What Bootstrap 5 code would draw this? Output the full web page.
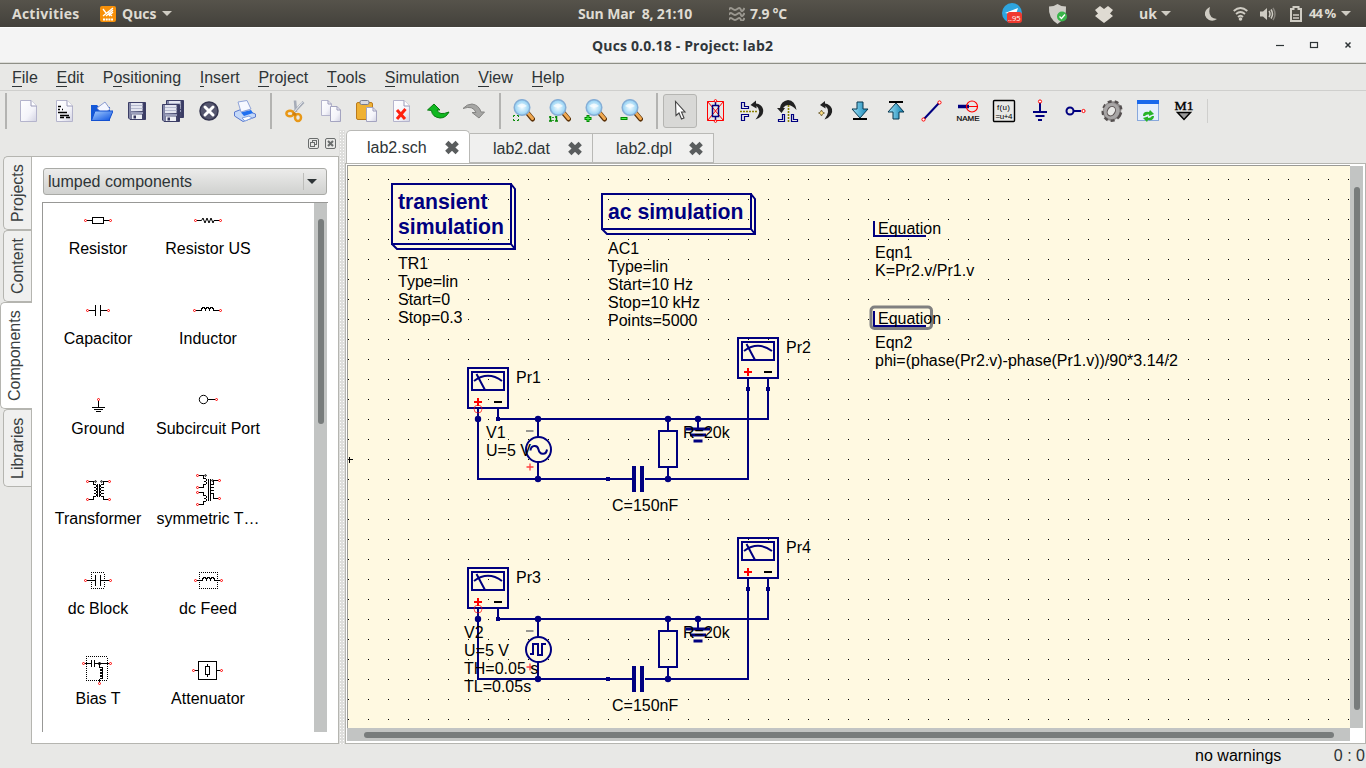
<!DOCTYPE html>
<html lang="en">
<head>
<meta charset="utf-8">
<title>Qucs 0.0.18 - Project: lab2</title>
<link href="https://cdn.jsdelivr.net/npm/bootstrap@5.3.0/dist/css/bootstrap.min.css" rel="stylesheet">
<script src="https://cdn.jsdelivr.net/npm/bootstrap@5.3.0/dist/js/bootstrap.bundle.min.js"></script>
<style>
body{width:1366px;height:768px;overflow:hidden;background:#e8e8e6;color:#2e3436;font:16px/18px "Liberation Sans",Arial,sans-serif}
body>*{flex:none}
svg{display:block;flex:none}
.panel-top{height:27px;background:linear-gradient(#56534b,#43413b);color:#dfdbd2;font:700 14px/27px "Open Sans","Noto Sans",sans-serif;white-space:pre}
.panel-top span,.panel-top svg{flex:none}
.title-bar{height:36px;background:#f4f4f4;color:#30363a;font:700 14px/36px "Open Sans","Noto Sans",sans-serif;border-top:1px solid #fdfdfd;border-bottom:1px solid #dcdcd8}
.menu-bar{height:28px;gap:18.7px;padding:2px 0 0 12px;border-top:1px solid #8e8f87;border-bottom:1px solid #cfcfcd;line-height:24px}
.menu-bar u{text-decoration:none;box-shadow:0 1px 0 #2e3436;display:inline-block;height:20px;line-height:24px}
.tool-bar{height:39px;padding:2px 0 0 5px}
.tool-bar .grip{width:2px;height:36px;background:#b3b3b1;flex:none;margin-right:3.500px}
.tool{width:36px;height:36px;display:flex;align-items:center;justify-content:center;flex:none}
.tool.sel span{width:34px;height:34px;border:1px solid #b5b5b2;border-radius:3px;background:#d8d8d6;display:flex;align-items:center;justify-content:center}
.dock{width:339px;height:614px;flex:none}
.dock-head{height:26px;gap:4px;padding:7px 2px 0 0}
.side-tabs{width:31px;flex:none}
.side-tab{writing-mode:vertical-rl;transform:rotate(180deg);background:#f0f0ef;border:1px solid #b5b5b0;border-left:0;border-radius:0 5px 5px 0;width:28px;margin-left:3px;line-height:27px;text-align:center;color:#3a3f41}
.side-tab.act{width:32px;margin-left:0;background:#fff;position:relative;z-index:2}
.dock-page{background:#fff;border:1px solid #b5b5b0;width:308px;height:588px;padding:11px 11px 0 10px}
.combo{height:27px;width:284px;margin-left:1px;border:1px solid #a9aaa6;border-radius:3px;background:linear-gradient(#ececeb,#d0d1cf);padding:0 9px 0 4px;line-height:25px}
.combo i{border:5px solid transparent;border-top:5px solid #2e3436;border-bottom:0}
.combo b{width:1px;height:17px;background:#bdbdba;margin:0 3px 0 auto}
.comp-list{height:530px;margin-top:7px;border-top:1px solid #989896;border-left:1px solid #989896;overflow:hidden;color:#000;width:286px}
.comp-grid{width:271px;flex:none;align-content:flex-start;line-height:22px}
.comp-cell{width:110px;height:90px;text-align:center;flex:none;white-space:nowrap}
.comp-cell svg{margin-bottom:1px;shape-rendering:crispEdges}
.comp-cell circle,.comp-cell .soft{shape-rendering:geometricPrecision}
.vscroll{width:13px;background:#c2c4c3;flex:none}
.thumb{background:#787c7c;border-radius:3px}
.splitter{width:6px;height:614px;flex:none;background:radial-gradient(#fff 35%,transparent 40%) 0 0/3px 3px,#dededc}
.doc-tab{height:30px;border:1px solid #b9b9b6;border-left:0;background:#f0f0ef;width:123px;padding:0 9px 0 23px;margin-top:3px;line-height:27px}
.doc-tab.act{height:33px;width:124px;margin:0;border-left:1px solid #b9b9b6;border-bottom:0;background:#fff;border-radius:5px 5px 0 0;padding-left:20px;line-height:31px}
.doc-frame{background:#fff;border:1px solid #b5b5b0;height:581px;padding:1px 2px 1px 1px}
.sheet{border-top:1px solid #9a9a96;border-left:1px solid #9a9a96;width:1003px;height:563px}
.hscroll{height:13px;width:1003px;background:#c2c4c3;padding:4px 16px 3px 17px}
.status-line{height:24px;line-height:24px;padding-right:1px}
.bd{font-weight:700;font-size:21.2px;fill:#000080}
.ln{fill:none;stroke:#000080;stroke-width:2}
.k{fill:none;stroke:#000;stroke-width:1}
.rd{fill:#fff;stroke:#f00;stroke-width:1}
</style>
</head>
<body class="d-flex flex-column">
<svg width="0" height="0" class="position-absolute">
<defs>
<linearGradient id="gd" x1="0" y1="0" x2="1" y2="1"><stop offset="0" stop-color="#fff"/><stop offset=".6" stop-color="#f4f4fa"/><stop offset="1" stop-color="#d2d2e2"/></linearGradient>
<linearGradient id="gb" x1="0" y1="0" x2="1" y2="1"><stop offset="0" stop-color="#a8d0ff"/><stop offset="1" stop-color="#0a50e0"/></linearGradient>
<linearGradient id="gs" x1="0" y1="0" x2="1" y2="0"><stop offset="0" stop-color="#8b8fae"/><stop offset="1" stop-color="#34365e"/></linearGradient>
<linearGradient id="ga" x1="0" y1="0" x2="1" y2="0"><stop offset="0" stop-color="#9fe4fa"/><stop offset="1" stop-color="#1080b0"/></linearGradient>
<radialGradient id="gl"><stop offset="0" stop-color="#f4fcff"/><stop offset="1" stop-color="#90d0f4"/></radialGradient>
<symbol id="floppy" viewBox="0 0 18 18"><path d="M.5 .5H17.500V17.500H2L.5 16Z" fill="url(#gs)" stroke="#3c3e66"/><path d="M3 1H14.500V9H3Z" fill="#e4e6f0"/><path d="M3 3.500H14.500M3 6.500H14.500" stroke="#b4b9ce"/><path d="M3 10H15V12H3Z" fill="#9a9eba"/><path d="M4 12.500H14V17H4Z" fill="#eef0f6"/><path d="M5.500 13.500H8V16.500H5.500Z" fill="#34365e"/></symbol>
<symbol id="glass" viewBox="0 0 24 24"><path d="M16.500 14L21.500 20" stroke="#5c3208" stroke-width="5" stroke-linecap="round"/><path d="M16.500 13.500L21.500 19.500" stroke="#f0a850" stroke-width="3" stroke-linecap="round"/><circle cx="11" cy="8.500" r="7.800" fill="url(#gl)" stroke="#86aed6" stroke-width="1.500"/><path d="M6 7Q11 2 16 7Q11 10 6 7" fill="#fff" opacity=".7"/></symbol>
<symbol id="closeX" viewBox="0 0 15 15"><path d="M2.300 2.600L12.700 12.400M12.700 2.600L2.300 12.400" stroke="#5a5d5e" stroke-width="4.800"/></symbol>
</defs>
</svg>

<header class="panel-top d-flex align-items-center">
<span style="width:100px;padding-left:12px;letter-spacing:.25px">Activities</span>
<svg width="16" height="16" viewBox="0 0 16 16"><rect width="16" height="16" rx="2" fill="#f79009"/><path d="M3 3L6 7M3 10L13 2M6 10L13 4M9 10L13 6M8 6L12 10" stroke="#fff" stroke-width="1.300"/><path d="M3 13.500H13" stroke="#fff" stroke-width="2" stroke-dasharray="2 .7"/></svg>
<span style="width:46px;padding-left:6px">Qucs</span>
<svg width="10" height="6" viewBox="0 0 10 6"><path d="M0 0H10L5 5Z" fill="#cfccc3"/></svg>
<span style="width:557px;padding-left:406px;letter-spacing:-.15px">Sun Mar  8, 21:10</span>
<svg width="16" height="15" viewBox="0 0 16 15"><path id="wv" d="M0 4Q1 1 3 2.500T6 4T9 2.500T12 4T15.500 2" fill="none" stroke="#9a978f" stroke-width="2"/><use href="#wv" y="5"/><use href="#wv" y="10"/></svg>
<span style="width:257px;padding-left:5px;letter-spacing:-.3px">7.9 °C</span>
<svg width="20" height="22" viewBox="0 0 20 22"><circle cx="10" cy="10" r="10" fill="#2ea5df"/><path d="M3 10L16 5L13 14L9 11Z" fill="#fff"/><rect x="5" y="9" width="15" height="11" rx="3" fill="#f03a30"/><text x="6" y="17.500" font-size="7.500" font-weight="400" fill="#fff" font-family="Open Sans">..95</text></svg>
<svg class="ms-auto" style="margin-right:27px" width="20" height="22" viewBox="0 0 20 22"><path d="M9.500 1Q13 3.500 18 3.500Q19 15 9.500 21Q0 15 1 3.500Q6 3.500 9.500 1Z" fill="#cfcdc7"/><circle cx="14" cy="13.500" r="5" fill="#39b54a"/><path d="M11.500 13.500L13.500 15.500L17 11.500" fill="none" stroke="#fff" stroke-width="1.300"/></svg>
<svg width="18" height="18" viewBox="0 0 18 18"><path d="M5 1L9 4L13 1L18 5L15 8.500L18 11L13 15L9 18L5 15L0 11L3 8.500L0 5Z" fill="#dfdbd2"/></svg>
<span style="width:48px;padding-left:26px">uk</span>
<svg width="10" height="6" viewBox="0 0 10 6"><path d="M0 0H10L5 5Z" fill="#cfccc3"/></svg>
<svg style="margin-left:34px" width="12" height="14" viewBox="0 0 12 14"><path d="M5 0Q2 11 12 12Q8 15 4 13Q-1 10 0 5.500Q1 1.500 5 0Z" fill="#cfccc3"/></svg>
<svg style="margin-left:16px" width="15" height="14" viewBox="0 0 15 14"><path d="M.7 4Q7.500 -2 14.300 4M3 7Q7.500 3 12 7M5 10Q7.500 7.500 10 10" fill="none" stroke="#cfccc3" stroke-width="1.800"/><circle cx="7.500" cy="12" r="1.800" fill="#cfccc3"/></svg>
<svg style="margin-left:12px" width="16" height="14" viewBox="0 0 16 14"><path d="M0 4.500H3L7 1V13L3 9.500H0Z" fill="#cfccc3"/><path d="M9 4Q11 7 9 10M11 2.500Q14 7 11 11.500" fill="none" stroke="#cfccc3" stroke-width="1.500"/><path d="M13 1Q17 7 13 13" fill="none" stroke="#85827b" stroke-width="1.500"/></svg>
<svg style="margin-left:14px" width="12" height="16" viewBox="0 0 12 16"><path d="M1 3H3.500V1H8.500V3H11V15H1Z" fill="none" stroke="#cfccc3" stroke-width="2"/><path d="M3 9H9M3 12H9" stroke="#cfccc3" stroke-width="1.500"/></svg>
<span style="width:39px;padding-left:7px;letter-spacing:-.9px;font-size:13px">44 %</span>
<svg style="margin-right:15px" width="10" height="6" viewBox="0 0 10 6"><path d="M0 0H10L5 5Z" fill="#cfccc3"/></svg>
</header>

<div class="title-bar d-flex align-items-start">
<div style="padding-left:592px;width:1276px;letter-spacing:.16px">Qucs 0.0.18 - Project: lab2</div>
<svg width="80" height="34" viewBox="1276 28 80 34"><path d="M1276 45.500H1284" stroke="#2e3436" stroke-width="1.200"/><rect x="1310.500" y="42.500" width="7" height="5" fill="none" stroke="#2e3436" stroke-width="1.200"/><path d="M1345.500 42.500L1350.500 47.500M1350.500 42.500L1345.500 47.500" stroke="#2e3436" stroke-width="1.500"/></svg>
</div>

<nav class="menu-bar d-flex"><span><u>F</u>ile</span><span><u>E</u>dit</span><span>P<u>o</u>sitioning</span><span><u>I</u>nsert</span><span><u>P</u>roject</span><span><u>T</u>ools</span><span><u>S</u>imulation</span><span><u>V</u>iew</span><span><u>H</u>elp</span></nav>

<div class="tool-bar d-flex align-items-start">
<div class="grip"></div>
<div class="tool"><svg width="24" height="24"><path d="M3.500 1.500H14L19.500 7V22.500H3.500Z" fill="url(#gd)" stroke="#b4b4cc"/><path d="M14 1.500V7H19.500" fill="#fff" stroke="#9a9ab8"/></svg></div>
<div class="tool"><svg width="24" height="24"><path d="M3.500 1.500H14L19.500 7V22.500H3.500Z" fill="url(#gd)" stroke="#b4b4cc"/><path d="M14 1.500V7H19.500" fill="#fff" stroke="#9a9ab8"/><path d="M5 7.500H8M5 10.500H7M9 10.500H10M5 13.500H14M7 16.500H16M7 18.500H11M13 18.500H17" stroke="#000" stroke-width="1.300"/></svg></div>
<div class="tool"><svg width="24" height="24"><path d="M2 6H8L10 8H21V22H2Z" fill="#1458d8"/><path d="M8 9L16 3L21 10L14 16Z" fill="#f4f6ff" stroke="#8c9cd0"/><path d="M6 12H24L20 21.500H2.500Z" fill="url(#gb)" stroke="#1250d0"/></svg></div>
<div class="tool"><svg width="24" height="24"><use href="#floppy" x="3" y="3" width="18" height="18"/></svg></div>
<div class="tool"><svg width="24" height="24"><use href="#floppy" x="5" y="1" width="18" height="18"/><use href="#floppy" x="1" y="5" width="18" height="18"/></svg></div>
<div class="tool"><svg width="24" height="24"><circle cx="12" cy="12" r="9" fill="#55566e" stroke="#33344e" stroke-width="1.500"/><path d="M8 8L16 16M16 8L8 16" stroke="#fff" stroke-width="3" stroke-linecap="round"/></svg></div>
<div class="tool"><svg width="24" height="24"><path d="M1.500 13L9 10L22.500 15V18L10 22.500L1.500 17Z" fill="#c4d8f8" stroke="#5a7ad0"/><path d="M5 3L14 1.500L18 10L8 13Z" fill="#f6f8ff" stroke="#90a4d8"/><path d="M8 13.500L18 11L20 14L11 17Z" fill="#2070f0"/><path d="M9 19L16 17L19 19L12 22Z" fill="#fff" stroke="#80a0e0"/></svg></div>
<div class="grip" style="margin-left:7.500px"></div>
<div class="tool"><svg width="24" height="24"><path d="M13 1.500L14 13M21.500 3L11 14" stroke="#a6acb8" stroke-width="2.600"/><path d="M20.500 3L12 13" stroke="#eef0f4"/><ellipse cx="8" cy="14.500" rx="3.600" ry="2.800" fill="none" stroke="#e89818" stroke-width="2.500"/><ellipse cx="16" cy="18.500" rx="3" ry="3.600" fill="none" stroke="#e89818" stroke-width="2.500"/><path d="M11 14L14 16" stroke="#d08010" stroke-width="3"/></svg></div>
<div class="tool"><svg width="24" height="24"><path d="M3.500 1.500H10L13.500 5V16.500H3.500Z" fill="url(#gd)" stroke="#b4b4cc"/><path d="M10 1.500V5H13.500" fill="none" stroke="#9a9ab8"/><path d="M12.500 7.500H19L22.500 11V22.500H12.500Z" fill="url(#gd)" stroke="#a4a4c0"/><path d="M19 7.500V11H22.500" fill="none" stroke="#9a9ab8"/></svg></div>
<div class="tool"><svg width="24" height="24"><rect x="2.500" y="3.500" width="16" height="17" rx="1.500" fill="#efb134" stroke="#bb7b1c"/><rect x="6" y="1.500" width="9" height="4" rx="1.500" fill="#d8dae2" stroke="#787c8c"/><path d="M12.500 8.500H19L22.500 12V22.500H12.500Z" fill="url(#gd)" stroke="#a4a4c0"/><path d="M19 8.500V12H22.500" fill="none" stroke="#9a9ab8"/></svg></div>
<div class="tool"><svg width="24" height="24"><path d="M3.500 1.500H14L19.500 7V22.500H3.500Z" fill="url(#gd)" stroke="#b4b4cc"/><path d="M14 1.500V7H19.500" fill="#fff" stroke="#9a9ab8"/><path d="M7 11L15 20M15.500 10L7 20" stroke="#ff2010" stroke-width="3"/></svg></div>
<div class="tool"><svg width="24" height="24"><path d="M1.500 11L8 5L14 11H11Q13 17 23 13Q20 19 14 19Q6 18 5.500 11.500Z" fill="#10b820" stroke="#087c10"/></svg></div>
<div class="tool"><svg width="24" height="24"><path d="M22.500 13L17 19L10 13.500H14Q11 6 1 9.500Q5 5 10 5Q17 6 19 13Z" fill="#a6a6a4" stroke="#858583"/></svg></div>
<div class="grip" style="margin-left:7.500px"></div>
<div class="tool"><svg width="24" height="24"><use href="#glass"/><path d="M2.500 18V16.500H4M6 16.500H7.500V18M2.500 20V21.500H4M6 21.500H7.500V20" fill="none" stroke="#008800"/></svg></div>
<div class="tool"><svg width="24" height="24"><use href="#glass"/><path d="M3.500 17V22M2 22H5M2 18H4M9.500 17V22M8 22H11M8 18H10M6 18V19M6 21V22" fill="none" stroke="#008800" stroke-width="1.500"/></svg></div>
<div class="tool"><svg width="24" height="24"><use href="#glass"/><path d="M5 16V23M1.500 19.500H8.500" stroke="#008800" stroke-width="3"/><path d="M5 17V22M2.500 19.500H7.500" stroke="#50f050"/></svg></div>
<div class="tool"><svg width="24" height="24"><use href="#glass"/><path d="M1.500 19.500H8.500" stroke="#008800" stroke-width="3"/><path d="M2.500 19.500H7.500" stroke="#50f050"/></svg></div>
<div class="grip" style="margin-left:7.500px"></div>
<div class="tool sel"><span><svg width="24" height="24"><path d="M7.500 2.500L8 16.500L11 14L13.500 20L16 19L13.500 13H17Z" fill="#fff" stroke="#444" stroke-width="1.100"/></svg></span></div>
<div class="tool"><svg width="24" height="24"><path d="M3.500 2.500H19.500V21.500H3.500ZM3.500 2.500L19.500 21.500M19.500 2.500L3.500 21.500" fill="none" stroke="#f00"/><path d="M11.500 3V6M11.500 18V21" stroke="#000080" stroke-width="1.500"/><rect x="8.500" y="6.500" width="6" height="11" fill="none" stroke="#000080" stroke-width="1.500"/><circle cx="11.500" cy="1.800" r="1.200" class="rd"/><circle cx="11.500" cy="22.200" r="1.200" class="rd"/></svg></div>
<div class="tool"><svg width="24" height="24"><path d="M1.500 3.500H4.500V7.500H8.500V9.500H1.500ZM1.500 21.500H4.500V17.500H8.500V15.500H1.500Z" fill="#e8e8e6" stroke="#000080" stroke-width="1.200"/><path d="M0 12.500H18" stroke="#8a8000" stroke-width="1.600" stroke-dasharray="2 1"/><path d="M16 1.500L10.500 6L16.500 9.500V7Q22.500 12 15.500 20.500Q24.500 17 23 10Q21.500 5 16 4.500Z" fill="#222"/></svg></div>
<div class="tool"><svg width="24" height="24"><path d="M2.500 22.500V20.500H6.500V15.500H8.500V22.500ZM21.500 22.500V20.500H17.500V15.500H15.500V22.500Z" fill="#e8e8e6" stroke="#000080" stroke-width="1.200"/><path d="M12.500 6V24" stroke="#8a8000" stroke-width="1.600" stroke-dasharray="2 1"/><path d="M1 9L5.500 14L9 9H7Q12 2 20.500 11Q19 1.500 12 1Q5 2 4 9Z" fill="#222"/></svg></div>
<div class="tool"><svg width="24" height="24"><path d="M13 2L8 6L13.500 9.500V7Q19 12 12.500 20.500Q21.500 17 20 10Q18 5 13 4.500Z" fill="#222"/><path d="M9.500 11L10.500 13L12.500 14L10.500 15L9.500 17L8.500 15L6.500 14L8.500 13Z" fill="#ffe080" stroke="#6a5a30" stroke-width=".8"/></svg></div>
<div class="tool"><svg width="24" height="24"><path d="M9 3H15V10H20L12 19L4 10H9Z" fill="url(#ga)" stroke="#083850"/><path d="M5 20H19" stroke="#000" stroke-width="2"/></svg></div>
<div class="tool"><svg width="24" height="24"><path d="M9 20H15V13H20L12 4L4 13H9Z" fill="url(#ga)" stroke="#083850"/><path d="M5 3H19" stroke="#000" stroke-width="2"/></svg></div>
<div class="tool"><svg width="24" height="24"><path d="M4 20L19 4" stroke="#000080" stroke-width="2"/><circle cx="3.500" cy="20.500" r="1.600" class="rd"/><circle cx="19.500" cy="3.500" r="1.600" class="rd"/></svg></div>
<div class="tool"><svg width="24" height="24"><path d="M2 7.500H13" stroke="#000080" stroke-width="3.500"/><circle cx="16" cy="7.500" r="5.500" fill="none" stroke="#f00" stroke-width="1.200"/><path d="M13 7.500H22" stroke="#f00"/><text x="0.500" y="22" font-size="8" textLength="23" lengthAdjust="spacingAndGlyphs" fill="#000" stroke="#000" stroke-width=".2">NAME</text></svg></div>
<div class="tool"><svg width="24" height="24"><rect x="1.500" y="1.500" width="21" height="21" rx="1" fill="none" stroke="#000" stroke-width="1.400"/><text x="5" y="11" font-size="8" textLength="13" fill="#000">f(u)</text><text x="3.500" y="19.500" font-size="8" textLength="17" fill="#000">=u+4</text></svg></div>
<div class="tool"><svg width="24" height="24"><path d="M12 4V12M5 13H19M7.500 17H16.500M10 21H14" stroke="#000080" stroke-width="2"/><circle cx="12" cy="2.500" r="1.600" class="rd"/></svg></div>
<div class="tool"><svg width="24" height="24"><circle cx="6" cy="12" r="3.500" fill="none" stroke="#000080" stroke-width="2"/><path d="M10 12H17" stroke="#000080" stroke-width="2"/><circle cx="19.500" cy="12" r="1.600" class="rd"/></svg></div>
<div class="tool"><svg width="24" height="24"><ellipse cx="12" cy="12" rx="9" ry="10" transform="rotate(30 12 12)" fill="#8c8888" stroke="#555050" stroke-width="2.500" stroke-dasharray="4 3"/><circle cx="11.500" cy="12" r="8" fill="#a8a6a6"/><ellipse cx="11.500" cy="12.500" rx="3.800" ry="5" transform="rotate(30 12 12)" fill="#e8e8e6" stroke="#5a5252"/></svg></div>
<div class="tool"><svg width="24" height="24"><rect x="1.500" y="1.500" width="21" height="20" fill="#e4eefc" stroke="#88a8dc"/><path d="M1 1H23V5H1Z" fill="#1868ec"/><path d="M7 17Q7 12 13 13L14 11L18 15L13 17L13 15.500Q10 15 9 17ZM18 17Q18 22 12 21L11 23L7 19L12 17.500V19Q15 19 16 17Z" fill="#28b428"/></svg></div>
<div class="tool"><svg width="24" height="24"><text x="2.500" y="10.500" font-family="Liberation Serif" font-size="13" textLength="19" lengthAdjust="spacingAndGlyphs" fill="#000" stroke="#000" stroke-width=".4">M1</text><path d="M5.500 13.500H18.500L12 20.500Z" fill="#999" stroke="#000" stroke-width="1.500"/></svg></div>
<div style="width:1px;height:24px;background:#cfcfcd;margin:6px 0 0 5px"></div>
</div>

<main class="d-flex">
<aside class="dock">
<div class="dock-head d-flex justify-content-end">
<svg width="13" height="13" viewBox="0 0 13 13" fill="none" stroke="#6a6d6d"><rect x="1.500" y="1.500" width="10" height="10" rx="1.500"/><rect x="5.500" y="3.500" width="4" height="4"/><rect x="3.500" y="5.500" width="4" height="4" fill="#e8e8e6"/></svg>
<svg width="13" height="13" viewBox="0 0 13 13" fill="none" stroke="#6a6d6d"><rect x="1.500" y="1.500" width="10" height="10" rx="1.500"/><path d="M4 4L9 9M9 4L4 9" stroke-width="2"/></svg>
</div>
<div class="d-flex">
<div class="side-tabs">
<div class="side-tab" style="height:74px">Projects</div><div class="side-tab" style="height:72px">Content</div><div class="side-tab act" style="height:107px">Components</div><div class="side-tab" style="height:78px">Libraries</div>
</div>
<section class="dock-page">
<div class="combo d-flex align-items-center"><span>lumped components</span><b></b><i></i></div>
<div class="comp-list d-flex">
<div class="comp-grid d-flex flex-wrap">
<div class="comp-cell"><svg width="110" height="34"><path class="k" d="M44 17.500H49.500M60.500 17.500H66M49.500 14.500H60.500V20.500H49.500Z"/><circle class="rd" cx="42.500" cy="17.500" r="1"/><circle class="rd" cx="67.500" cy="17.500" r="1"/></svg>Resistor</div>
<div class="comp-cell"><svg width="110" height="34"><path class="k soft" d="M44 17.500H48.500L50 15L52 20L54 15L56 20L58 15L60 20L61 17.500H66"/><circle class="rd" cx="42.500" cy="17.500" r="1"/><circle class="rd" cx="67.500" cy="17.500" r="1"/></svg>Resistor US</div>
<div class="comp-cell"><svg width="110" height="34"><path class="k" d="M46 17.500H52.500M57.500 17.500H64M52.500 12V23M57.500 12V23"/><circle class="rd" cx="44.500" cy="17.500" r="1"/><circle class="rd" cx="65.500" cy="17.500" r="1"/></svg>Capacitor</div>
<div class="comp-cell"><svg width="110" height="34"><path class="k" d="M43 17.500H48.500a2 3 0 0 1 4 0a2 3 0 0 1 4 0a2 3 0 0 1 4 0H66"/><circle class="rd" cx="41.500" cy="17.500" r="1"/><circle class="rd" cx="67.500" cy="17.500" r="1"/></svg>Inductor</div>
<div class="comp-cell"><svg width="110" height="34"><path class="k" d="M55.500 18V24M49 24.500H62M51 26.500H60M53 28.500H58"/><circle class="rd" cx="55.500" cy="16.500" r="1"/></svg>Ground</div>
<div class="comp-cell"><svg width="110" height="34"><circle class="k" cx="50.500" cy="16.500" r="4.200"/><path class="k" d="M55 16.500H62"/><circle class="rd" cx="63.500" cy="16.500" r="1"/></svg>Subcircuit Port</div>
<div class="comp-cell"><svg width="110" height="34"><path class="k" d="M46 8.500H50.500V11.500a3 1.500 0 0 1 0 3a3 1.500 0 0 1 0 3a3 1.500 0 0 1 0 3a3 1.500 0 0 1 0 3V26.500H46M65 8.500H60.500V11.500a3 1.500 0 0 0 0 3a3 1.500 0 0 0 0 3a3 1.500 0 0 0 0 3a3 1.500 0 0 0 0 3V26.500H65M54.500 11V24M56.500 11V24"/><circle class="k" cx="52.500" cy="8.500" r=".8"/><circle class="k" cx="58.500" cy="8.500" r=".8"/><circle class="rd" cx="44.500" cy="8.500" r="1"/><circle class="rd" cx="66.500" cy="8.500" r="1"/><circle class="rd" cx="44.500" cy="26.500" r="1"/><circle class="rd" cx="66.500" cy="26.500" r="1"/></svg>Transformer</div>
<div class="comp-cell"><svg width="110" height="34"><path class="k" d="M46 2.500H50.500V5.500a3 1.500 0 0 1 0 3a3 1.500 0 0 1 0 3V14.500H46M46 19.500H50.500V22.500a3 1.500 0 0 1 0 3a3 1.500 0 0 1 0 3V31.500H46M65 7.500H60.500V11.500a3 1.500 0 0 0 0 3a3 1.500 0 0 0 0 3a3 1.500 0 0 0 0 3V25.500H65M55.500 6V28M57.500 6V28"/><circle class="k" cx="52.500" cy="2.500" r=".8"/><circle class="k" cx="59.500" cy="7.500" r=".8"/><circle class="rd" cx="44.500" cy="2.500" r="1"/><circle class="rd" cx="44.500" cy="14.500" r="1"/><circle class="rd" cx="44.500" cy="19.500" r="1"/><circle class="rd" cx="44.500" cy="31.500" r="1"/><circle class="rd" cx="66.500" cy="7.500" r="1"/><circle class="rd" cx="66.500" cy="25.500" r="1"/></svg>symmetric T…</div>
<div class="comp-cell"><svg width="110" height="34"><path class="k" stroke-dasharray="1 1" d="M48 9.500H62M48 25.500H62M48.500 11V25M61.500 11V25"/><path class="k" d="M44 17.500H52.500M57.500 17.500H66M52.500 12V23M57.500 12V23"/><circle class="rd" cx="42.500" cy="17.500" r="1"/><circle class="rd" cx="67.500" cy="17.500" r="1"/></svg>dc Block</div>
<div class="comp-cell"><svg width="110" height="34"><path class="k" stroke-dasharray="1 1" d="M46 9.500H65M46 25.500H65M46.500 11V25M64.500 11V25"/><path class="k" d="M44 17.500H49.500a2 3 0 0 1 4 0a2 3 0 0 1 4 0a2 3 0 0 1 4 0H67"/><circle class="rd" cx="42.500" cy="17.500" r="1"/><circle class="rd" cx="68.500" cy="17.500" r="1"/></svg>dc Feed</div>
<div class="comp-cell"><svg width="110" height="34"><path class="k" stroke-dasharray="1 1" d="M43 3.500H65M43 27.500H65M43.500 5V27M64.500 5V27"/><path class="k" d="M42 10.500H48.500M51.500 10.500H66M48.500 7V14M51.500 7V14M56.500 10V14a3 1.500 0 0 1 0 3a3 1.500 0 0 1 0 3a3 1.500 0 0 1 0 3a3 1.500 0 0 1 0 3V29"/><circle cx="56.500" cy="10.500" r="1.500"/><circle class="rd" cx="40.500" cy="10.500" r="1"/><circle class="rd" cx="67.500" cy="10.500" r="1"/><circle class="rd" cx="56.500" cy="30.500" r="1"/></svg>Bias T</div>
<div class="comp-cell"><svg width="110" height="34"><path class="k" d="M42 17.500H45.500M63.500 17.500H67M45.500 8.500H63.500V26.500H45.500ZM52.500 13.500H56.500V21.500H52.500ZM54.500 11V13.500M54.500 21.500V24"/><circle class="rd" cx="40.500" cy="17.500" r="1"/><circle class="rd" cx="68.500" cy="17.500" r="1"/></svg>Attenuator</div>
</div>
<div class="vscroll d-flex justify-content-center"><div class="thumb" style="width:6px;height:205px;margin-top:16px"></div></div>
</div>
</section>
</div>
</aside>
<div class="splitter"></div>
<section class="flex-grow-1">
<div class="d-flex" style="height:33px">
<div class="doc-tab act d-flex align-items-center justify-content-between" style="margin-left:1px">lab2.sch<svg width="16" height="15"><use href="#closeX"/></svg></div>
<div class="doc-tab d-flex align-items-center justify-content-between">lab2.dat<svg width="16" height="15"><use href="#closeX"/></svg></div>
<div class="doc-tab d-flex align-items-center justify-content-between" style="width:121px">lab2.dpl<svg width="16" height="15"><use href="#closeX"/></svg></div>
</div>
<div class="doc-frame">
<div class="d-flex">
<div class="sheet">
<svg width="1002" height="562" viewBox="348 166 1002 562" font-size="16" fill="#000">
<defs>
<pattern id="dots" patternUnits="userSpaceOnUse" x="348" y="179" width="20" height="20"><rect width="1" height="1" fill="#000"/></pattern>
<g id="probe"><path class="ln" d="M468 368H508V408H468ZM472 372H504V390H472ZM476.500 374L485 390M474 381Q488 370.500 502 381"/><path d="M474 402H482M478 398V406" stroke="#f00" stroke-width="2"/><path d="M494 402H502" stroke="#000" stroke-width="2"/></g>
<g id="net">
<use href="#probe"/><use href="#probe" x="270" y="-30"/>
<path class="ln" d="M478 408V479H632M498 408V419H768V378M748 378V479H645M538 419V437M538 462V479M668 419V431M668 467V479M659 431H677V467H659ZM698 419V429"/>
<path class="ln" style="stroke-width:4" d="M634 466V492M642 466V492"/>
<path class="ln" style="stroke-width:3" d="M686 429H710M690 435H706M693.500 441H702.500"/>
<circle class="ln" cx="538.500" cy="449.500" r="12.500"/>
<g fill="#000080"><circle cx="478" cy="419" r="3.200"/><circle cx="538" cy="419" r="3.200"/><circle cx="538" cy="479" r="3.200"/><circle cx="668" cy="419" r="3.200"/><circle cx="668" cy="479" r="3.200"/><circle cx="698" cy="419" r="3.200"/><path d="M496 417h4v4h-4zM606 477h4v4h-4zM746 387h4v4h-4zM766 387h4v4h-4z"/></g>
<circle cx="478" cy="409" r="4" fill="none" stroke="#f00" stroke-opacity=".65"/>
<path d="M526 431H533.500" stroke="#777" stroke-width="1.500"/><path d="M526.500 467H533.500M530 463.500V470.500" stroke="#ff4040" stroke-width="1.300"/>
<text x="683" y="438">R=20k</text><text x="612" y="511">C=150nF</text>
</g>
</defs>
<rect x="348" y="166" width="1002" height="562" fill="#fff9e1"/>
<rect x="348" y="166" width="1002" height="562" fill="url(#dots)"/>
<path d="M348 459.500H353M349.500 457V463" stroke="#000"/>
<path class="ln" d="M392 184H511V244H392ZM511 184L515 189V249H397L392 244M511 244L515 249M602 194H751V229H602ZM751 194L755 199V234H607L602 229M751 229L755 234"/>
<text class="bd" x="398" y="209">transient</text><text class="bd" x="398" y="234">simulation</text><text class="bd" x="608" y="219">ac simulation</text>
<text x="398" y="269">TR1</text><text x="398" y="287">Type=lin</text><text x="398" y="305">Start=0</text><text x="398" y="323">Stop=0.3</text>
<text x="608" y="254">AC1</text><text x="608" y="272">Type=lin</text><text x="608" y="290">Start=10 Hz</text><text x="608" y="308">Stop=10 kHz</text><text x="608" y="326">Points=5000</text>
<path class="ln" d="M874 221V236H926M874 311V326H926"/>
<rect x="871" y="307" width="60.500" height="21.500" rx="3.500" fill="none" stroke="#808080" stroke-width="3"/>
<text x="878" y="234">Equation</text><text x="875" y="258">Eqn1</text><text x="875" y="276">K=Pr2.v/Pr1.v</text>
<text x="878" y="324">Equation</text><text x="875" y="348">Eqn2</text><text x="875" y="366">phi=(phase(Pr2.v)-phase(Pr1.v))/90*3.14/2</text>
<use href="#net"/><use href="#net" y="200"/>
<path class="ln" d="M530.500 450.500C531 445 537.500 444.500 538.500 449.500S546 456 547 449.500"/>
<path class="ln" d="M530 654H533V644H538V655H542V644H546"/>
<text x="516" y="383">Pr1</text><text x="786" y="353">Pr2</text><text x="516" y="583">Pr3</text><text x="786" y="553">Pr4</text>
<text x="486" y="438">V1</text><text x="486" y="456">U=5 V</text>
<text x="464" y="638">V2</text><text x="464" y="656">U=5 V</text><text x="464" y="674">TH=0.05 s</text><text x="464" y="692">TL=0.05s</text>
</svg>
</div>
<div class="vscroll d-flex justify-content-center" style="height:562px;margin-top:1px"><div class="thumb" style="width:6px;height:523px;margin-top:21px"></div></div>
</div>
<div class="hscroll"><div class="thumb h-100"></div></div>
</div>
</section>
</main>
<footer class="status-line d-flex justify-content-end"><span class="text-black" style="margin-right:52.500px">no warnings</span><span>0 : 0</span></footer>
</body>
</html>
